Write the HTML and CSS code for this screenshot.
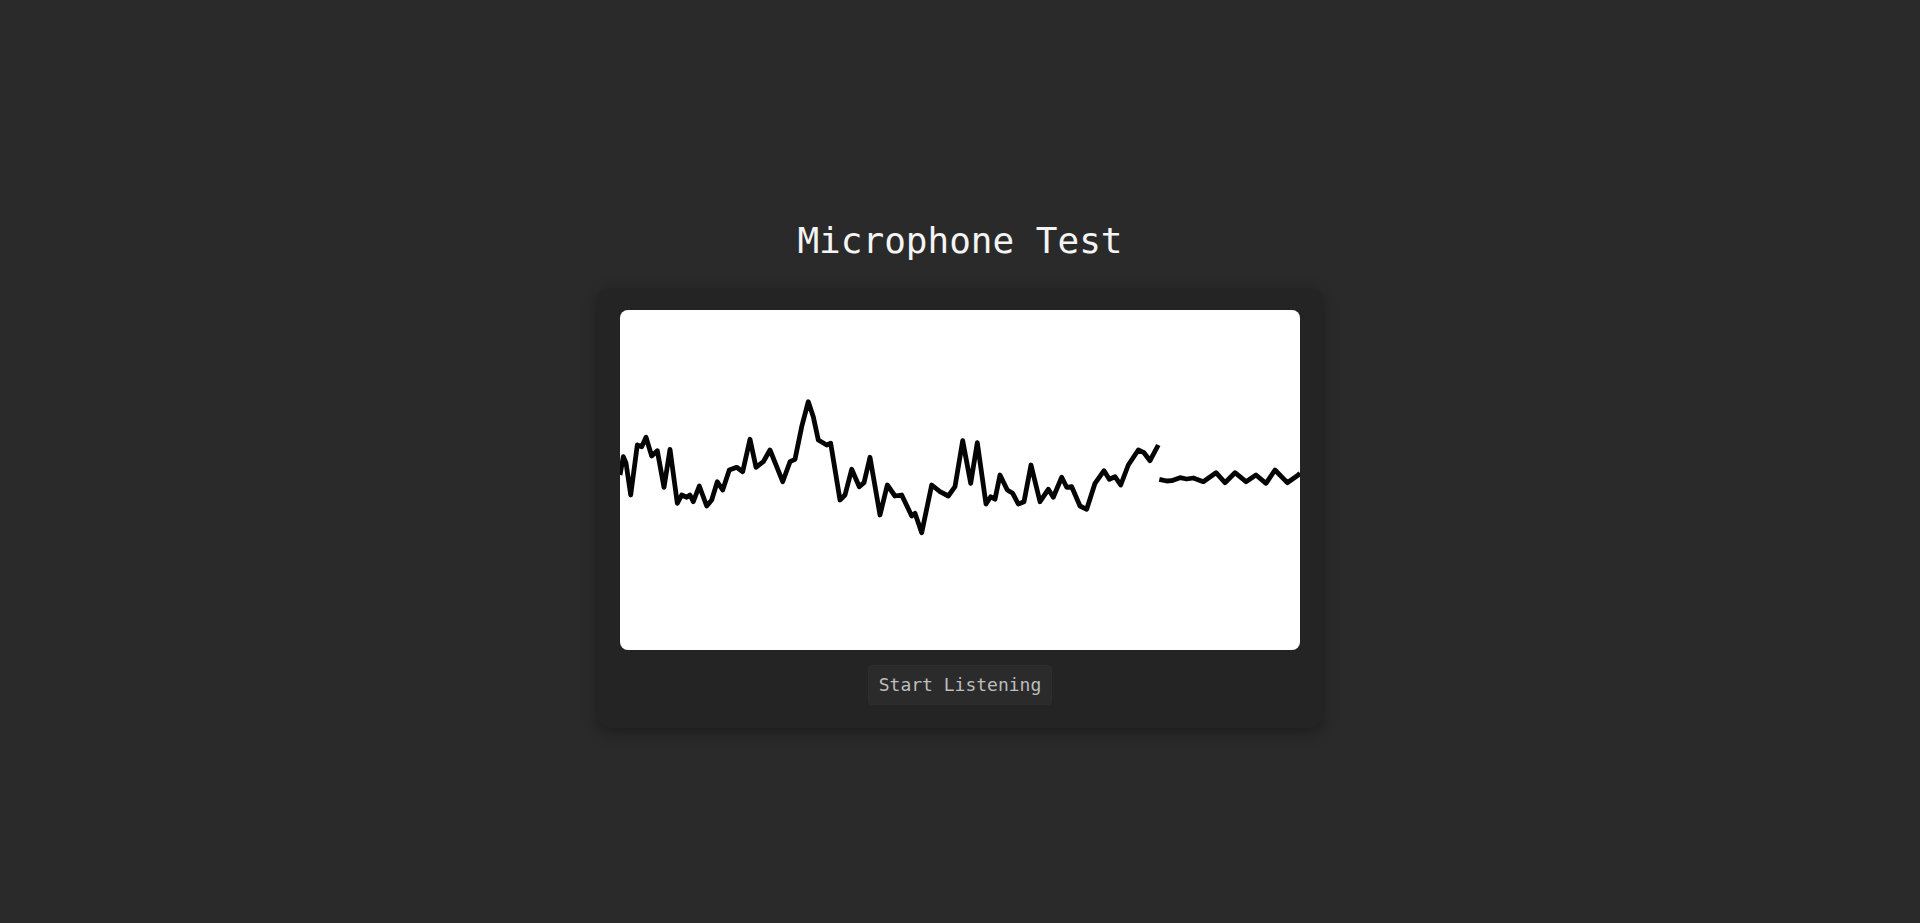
FILE: index.html
```html
<!DOCTYPE html>
<html lang="en">
<head>
<meta charset="utf-8">
<title>Microphone Test</title>
<link rel="stylesheet" href="styles.css">
</head>
<body>
<h1 class="title">Microphone Test</h1>
<div class="card">
  <div class="scope">
    <svg class="wave" viewBox="0 0 680 340" width="680" height="340">
      <polyline points="0,165 3.3,146.7 6,153 10.7,185 17.3,135 21.7,136.7 26,127.3 31.7,146 37.3,140.7 44,177.3 50,139.3 57.3,193.3 61.7,185 66.7,187.3 70,185 73.3,191.7 79.3,176 86.7,196 91.7,190 97.3,171.7 102.7,180 109.3,160 116.7,157.3 122.7,161.7 130,129.3 136,157.3 143.3,151.7 150,140 156.7,156.7 162.7,171.7 170,151.7 175,149.3 181.7,116.7 188.3,91.7 193.3,106.7 198.3,130 206.7,135 210.7,133.3 220,190 225,185 231.7,159.3 239.3,176.7 244,172.7 250,147.3 260,205 267.3,175 275,186 281.7,185 291.7,206 295,203.3 301.7,222.7 311.7,175 320,181.7 328.3,186 335,176.7 342.7,130.7 350.7,173.3 357.3,132.7 366,194 370.7,186.7 375,189.3 380,165 387.3,180 392.7,183.3 398.3,194 404,191.7 411,155 420,191.7 428.3,179.3 433.3,187.3 441.7,167.3 446.7,177.3 451.7,176.7 460,196 466.7,199.3 475,173.3 484,160.7 489.3,169.3 495,166.7 500.7,175 508.3,155 518.3,140 524,142.7 530,150.7 538.3,135"/>
      <polyline points="539.3,169.3 546.7,171 551.7,170.7 560,167.7 566.7,169 573.3,168 583.3,171.7 596,162.7 605,172.7 615,162.7 626,171.7 636,165 646,173.3 655,160 667.3,172.7 678.3,165 680,163"/>
    </svg>
  </div>
  <button class="listen">Start Listening</button>
</div>
</body>
</html>
```
FILE: styles.css
```css
html, body {
  margin: 0;
  height: 100%;
}
body {
  background: #2a2a2a;
  color: #f0f0f0;
  font-family: "DejaVu Sans Mono", monospace;
  display: flex;
  flex-direction: column;
  align-items: center;
  justify-content: center;
}
.title {
  font-size: 36px;
  font-weight: normal;
  margin: 24px 0 27px;
  color: #f4f4f4;
}
.card {
  background: #242424;
  border-radius: 12px;
  padding: 22px 22px 23px;
  box-shadow: 0 4px 14px rgba(0, 0, 0, 0.35);
  display: flex;
  flex-direction: column;
  align-items: center;
  gap: 15px;
}
.scope {
  width: 680px;
  height: 340px;
  background: #fff;
  border-radius: 8px;
  overflow: hidden;
}
.wave {
  display: block;
  filter: blur(0.45px);
}
.wave polyline {
  fill: none;
  stroke: #050505;
  stroke-width: 4.8;
  stroke-linejoin: round;
  stroke-linecap: butt;
}
.listen {
  font-family: "DejaVu Sans Mono", monospace;
  font-size: 18px;
  color: #bdbdbd;
  background: #2b2b2b;
  border: 1px solid #2e2e2e;
  border-radius: 4px;
  height: 40px;
  padding: 0 10px;
  cursor: pointer;
}
```
